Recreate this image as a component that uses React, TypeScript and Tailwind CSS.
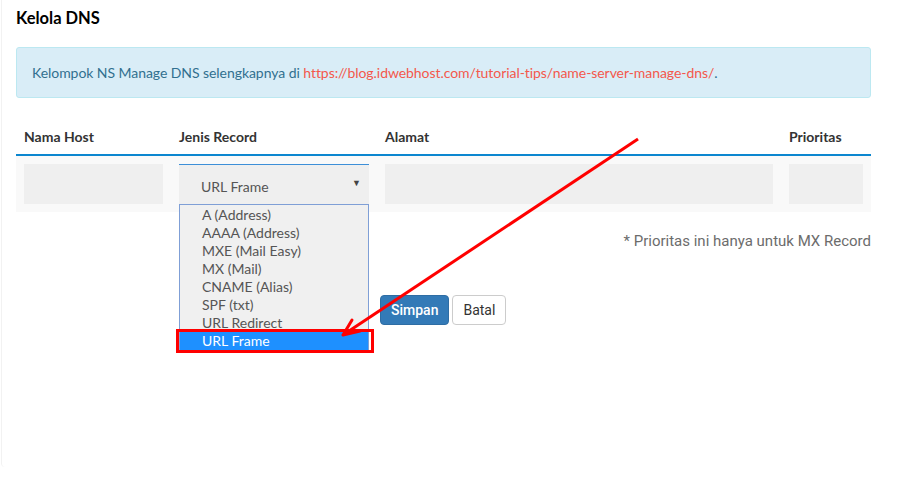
import React from "react";

const options = [
  "A (Address)",
  "AAAA (Address)",
  "MXE (Mail Easy)",
  "MX (Mail)",
  "CNAME (Alias)",
  "SPF (txt)",
  "URL Redirect",
  "URL Frame",
];

const RecordSelect = () => {
  return (
    <div className="relative">
      <div className="flex h-10 items-center justify-between border-t border-[#3d8fd8] bg-[#efefef] pr-2 pl-[22px] text-[14px] text-[#555]">
        <span className="pt-1">URL Frame</span>
        <span className="-mt-1 text-[9px] text-[#444]">▼</span>
      </div>

      {/* opened list */}
      <ul className="absolute top-10 left-0 z-10 w-full border border-[#7f9fd6] bg-[#f0f0f0] pt-px text-[14px] leading-[18px] text-[#555]">
        {options.map((opt) => (
          <li
            key={opt}
            className={
              opt === "URL Frame"
                ? "bg-[#1e90ff] pl-[22px] text-white"
                : "pl-[22px]"
            }
          >
            {opt}
          </li>
        ))}
      </ul>
    </div>
  );
};

const DnsTable = () => {
  return (
    <div className="mt-5">
      <div className="grid grid-cols-[155px_206px_404px_90px] border-b-[2px] border-[#0b86cf] text-[14px] leading-5 font-bold text-[#333]">
        <div className="px-2 pt-[9px] pb-[7px]">Nama Host</div>
        <div className="px-2 pt-[9px] pb-[7px]">Jenis Record</div>
        <div className="px-2 pt-[9px] pb-[7px]">Alamat</div>
        <div className="px-2 pt-[9px] pb-[7px]">Prioritas</div>
      </div>
      <div className="grid grid-cols-[155px_206px_404px_90px] bg-[#f9f9f9]">
        <div className="p-2">
          <div className="h-10 bg-[#efefef]" />
        </div>
        <div className="p-2">
          <RecordSelect />
        </div>
        <div className="p-2">
          <div className="h-10 bg-[#efefef]" />
        </div>
        <div className="p-2">
          <div className="h-10 bg-[#efefef]" />
        </div>
      </div>
    </div>
  );
};

const Annotation = () => {
  return (
    <svg
      className="pointer-events-none absolute top-0 left-0 z-20"
      width="923"
      height="480"
      viewBox="0 0 923 480"
    >
      <rect
        x="177.5"
        y="330.5"
        width="195"
        height="21"
        fill="none"
        stroke="#ff0000"
        strokeWidth="3"
      />
      <line
        x1="638"
        y1="139"
        x2="346"
        y2="333"
        stroke="#ff0000"
        strokeWidth="3"
      />
      <path
        d="M343 335 L352 320 M343 335 L360 331"
        stroke="#ff0000"
        strokeWidth="3"
        fill="none"
        strokeLinecap="round"
      />
    </svg>
  );
};

export default function App() {
  return (
    <div className="relative h-[480px] w-[923px] overflow-hidden bg-white font-['Lato','Noto_Sans',sans-serif]">
      <div className="ml-px h-[467px] rounded-bl border-l border-[#f2f2f2] pt-[9px] pr-[52px] pl-[14px]">
        <h1 className="text-[16.5px] leading-[18px] font-bold text-black">
          Kelola DNS
        </h1>

        <div className="mt-5 rounded-[3px] border border-[#bce8f1] bg-[#d9edf7] px-[15px] py-[15px] text-[14px] leading-[19px] tracking-[-0.06px] text-[#31708f]">
          Kelompok NS Manage DNS selengkapnya di{" "}
          <a className="text-[#f4584c]" href="#">
            https://blog.idwebhost.com/tutorial-tips/name-server-manage-dns/
          </a>
          .
        </div>

        <DnsTable />

        <p className="mt-[19px] text-right font-['Roboto',sans-serif] text-[15px] leading-5 text-[#6c6c6c]">
          * Prioritas ini hanya untuk MX Record
        </p>

        <div className="mt-[44px] ml-[364px] flex gap-[3px] font-['Roboto',sans-serif] text-[14px]">
          <button className="h-[30px] rounded-[4px] border border-[#2e6da4] bg-[#337ab7] px-[10px] font-medium text-white">
            Simpan
          </button>
          <button className="h-[30px] rounded-[4px] border border-[#cccccc] bg-white px-[10px] text-[#333]">
            Batal
          </button>
        </div>
      </div>

      <Annotation />
    </div>
  );
}
